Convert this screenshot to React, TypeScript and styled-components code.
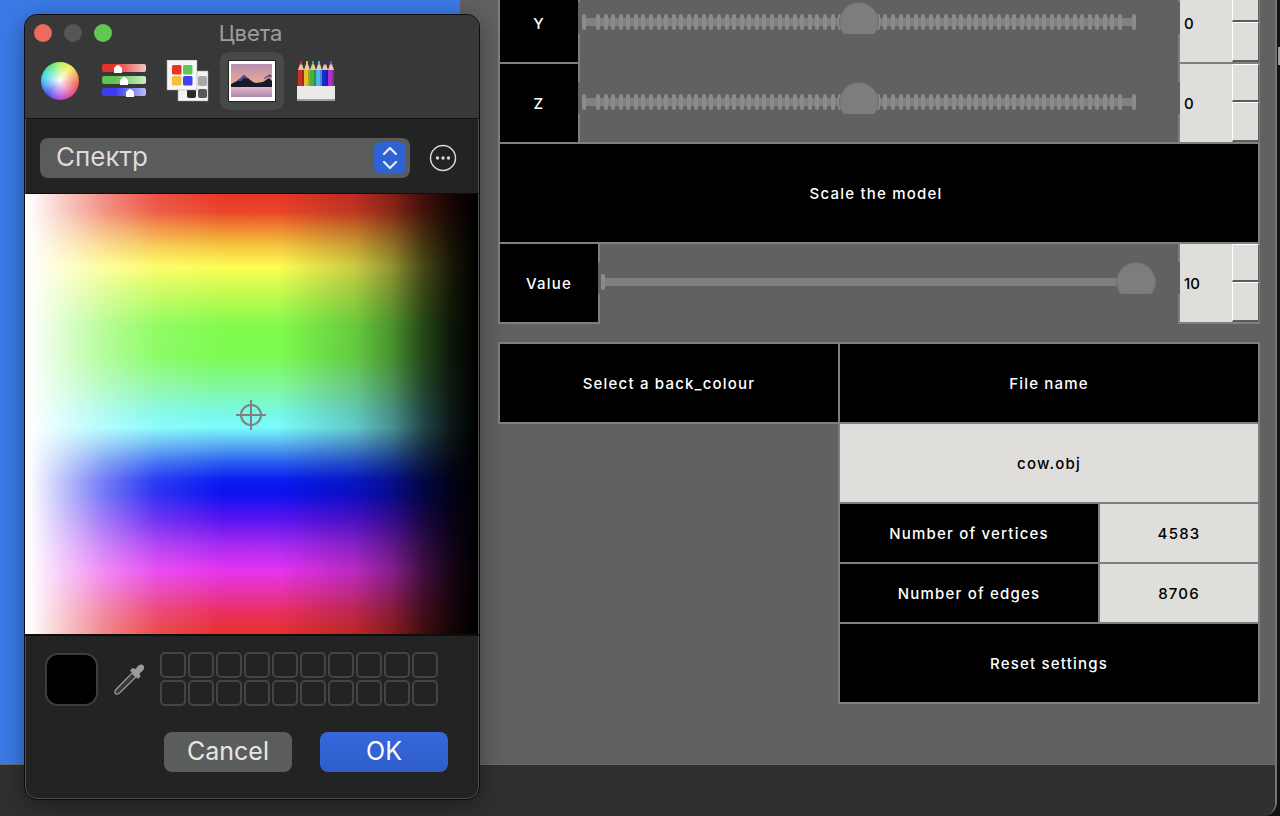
import React from 'react';
import styled, { createGlobalStyle } from 'styled-components';

const GlobalStyle = createGlobalStyle`
    html, body {
        margin: 0;
        padding: 0;
        overflow: hidden;
        background: #121212;
        font-family: "Inter", "Liberation Sans", sans-serif;
    }
`;

const Desktop = styled.div`
    position: relative;
    height: 100vh;
    overflow: hidden;
    background: #121212;
`;

const AppWindow = styled.div`
    display: flex;
    flex-direction: column;
    box-sizing: border-box;
    width: 1277px;
    height: 100%;
    overflow: hidden;
    border-right: 2px solid #747474;
    border-bottom-right-radius: 14px;
`;

const MainArea = styled.div`
    display: flex;
    flex: 1;
    min-height: 0;
`;

const Wallpaper = styled.div`
    width: 460px;
    flex: none;
    background: #3b7be8;
`;

const Panel = styled.div`
    flex: 1;
    overflow: hidden;
    padding-left: 40px;
    background: #616161;
`;

const BottomBar = styled.div`
    height: 51px;
    flex: none;
    background: #303030;
    border-top: 1px solid #6c6c6c;
`;

const EdgeMark = styled.div`
    position: absolute;
    top: 47px;
    right: 0;
    width: 2px;
    height: 18px;
    background: #a0a0a0;
`;

/* qt form */

const Form = styled.div`
    display: flex;
    flex-direction: column;
    gap: 2px;
    width: 758px;
    margin-top: -16px;
`;

const Row = styled.div<{ $h: number }>`
    display: flex;
    gap: 2px;
    height: ${p => p.$h}px;
    flex: none;
`;

const Cell = styled.div<{ $w?: number; $light?: boolean; $nudge?: number }>`
    display: flex;
    align-items: center;
    justify-content: center;
    box-sizing: border-box;
    flex: ${p => (p.$w ? `0 0 ${p.$w}px` : '1')};
    padding-right: ${p => p.$nudge || 0}px;
    box-shadow: 0 0 0 2px #7f7f7f;
    background: ${p => (p.$light ? '#dfdeda' : '#000')};
    color: ${p => (p.$light ? '#000' : '#fff')};
    font-size: 15px;
    font-weight: 500;
    letter-spacing: 1.2px;
`;

const SliderCell = styled.div`
    flex: 1;
    padding-top: 18px;
    margin: 0 -2px;
    min-width: 0;
`;

const SliderBox = styled.div<{ $pad: number }>`
    position: relative;
    height: 32px;
    overflow: hidden;
    padding-left: ${p => p.$pad}px;
    background: #616161;
`;

const Rail = styled.div<{ $w: number }>`
    position: relative;
    display: flex;
    align-items: center;
    width: ${p => p.$w}px;
    height: 40px;
    background: linear-gradient(#808080, #808080) center / 100% 8px no-repeat;
`;

const Tick = styled.span<{ $gap: number; $end?: boolean }>`
    flex: none;
    width: 4px;
    height: 16px;
    margin-left: ${p => (p.$end ? 'auto' : `${p.$gap}px`)};
    border-radius: 2px;
    background: #8b8b8b;
`;

const Handle = styled.span<{ $left: number }>`
    position: absolute;
    top: 0;
    left: ${p => p.$left}px;
    box-sizing: border-box;
    width: 40px;
    height: 40px;
    border-radius: 50%;
    border: 1px solid #6c6c6c;
    background: #7d7d7d;
`;

const Spin = styled.div`
    display: flex;
    flex: 0 0 78px;
    box-shadow: 0 0 0 2px #7f7f7f;
    background: #dfdeda;
`;

const SpinValue = styled.div`
    flex: 1;
    display: flex;
    align-items: center;
    padding-left: 4px;
    color: #000;
    font-size: 15px;
    font-weight: 500;
`;

const SpinButtons = styled.div`
    display: flex;
    flex-direction: column;
    flex: 0 0 27px;
    margin-right: -1px;
`;

const SpinButton = styled.div<{ $down?: boolean }>`
    flex: ${p => (p.$down ? '0 0 40px' : '1')};
    box-sizing: border-box;
    background: #dfdeda;
    border-top: 1px solid #fff;
    border-left: 1px solid #fff;
    border-right: 1px solid #5c5c5c;
    border-bottom: 2px solid #5c5c5c;
`;

const FileGrid = styled.div`
    display: grid;
    grid-template-columns: 338px 418px;
    gap: 2px;
    margin-top: 20px;
    align-items: start;
`;

const Stack = styled.div`
    display: flex;
    flex-direction: column;
    gap: 2px;
`;

/* colour dialog */

const Dialog = styled.div`
    position: absolute;
    top: 14px;
    left: 24px;
    box-sizing: border-box;
    display: flex;
    flex-direction: column;
    width: 456px;
    height: 786px;
    overflow: hidden;
    border-radius: 13px;
    border: 1px solid #0c0c0c;
    background: #222323;
    box-shadow: inset 0 0 0 1px #4e4e4e, 0 6px 26px rgba(0, 0, 0, 0.38);
`;

const DialogHead = styled.div`
    flex: none;
    background: #383838;
    border-bottom: 1px solid #111;
    padding-bottom: 8px;
`;

const TitleRow = styled.div`
    position: relative;
    display: flex;
    align-items: center;
    justify-content: center;
    height: 37px;
    padding: 0 3px 2px 0;
    box-sizing: border-box;
    color: #9d9d9d;
    font-size: 22px;
`;

const Lights = styled.div`
    position: absolute;
    left: 9px;
    top: 9px;
    display: flex;
    gap: 12px;
`;

const Light = styled.span<{ $c: string }>`
    width: 18px;
    height: 18px;
    border-radius: 50%;
    background: ${p => p.$c};
`;

const Tabs = styled.div`
    display: flex;
    padding-left: 3px;
`;

const Tab = styled.div<{ $active?: boolean }>`
    display: flex;
    align-items: center;
    justify-content: center;
    width: 64px;
    height: 58px;
    border-radius: 9px;
    background: ${p => (p.$active ? '#474848' : 'transparent')};
`;

const ColorWheel = styled.div`
    width: 38px;
    height: 38px;
    border-radius: 50%;
    background:
        radial-gradient(circle, rgba(255, 255, 255, 0.95) 0%, rgba(255, 255, 255, 0.45) 40%, rgba(255, 255, 255, 0) 78%),
        conic-gradient(#a8ef50, #f8ee3e 35deg, #ee4a3a 100deg, #d8309a 150deg, #a030e0 185deg, #2a40e8 225deg, #28c8ee 280deg, #40e080 325deg, #a8ef50);
`;

const ControlRow = styled.div`
    display: flex;
    align-items: center;
    flex: none;
    box-sizing: border-box;
    height: 75px;
    padding: 3px 0 0 15px;
    border-bottom: 1px solid #0e0e0e;
`;

const Popup = styled.div`
    display: flex;
    align-items: center;
    justify-content: space-between;
    box-sizing: border-box;
    width: 370px;
    height: 40px;
    padding: 0 4px 0 16px;
    border-radius: 8px;
    background: #5a5b5b;
    color: #dcdcdc;
    font-size: 26px;
`;

const PopupLabel = styled.span`
    margin-top: -2px;
`;

const PopupArrows = styled.span`
    display: flex;
    align-items: center;
    justify-content: center;
    width: 32px;
    height: 32px;
    border-radius: 7px;
    background: #2f62d2;
`;

const MoreButton = styled.span`
    display: flex;
    margin-left: 19px;
`;

const Spectrum = styled.div`
    position: relative;
    flex: none;
    width: 454px;
    height: 440px;
    margin-left: -1px;
    background:
        linear-gradient(90deg, #fff 0%, #fff 1%, rgba(255, 255, 255, 0.72) 9%, rgba(255, 255, 255, 0.42) 18%, rgba(255, 255, 255, 0.14) 29%, rgba(255, 255, 255, 0) 44%),
        linear-gradient(90deg, rgba(0, 0, 0, 0) 56%, rgba(0, 0, 0, 0.2) 73%, rgba(0, 0, 0, 0.42) 81%, rgba(0, 0, 0, 0.72) 88%, rgba(0, 0, 0, 0.9) 94%, #000 99.500%),
        linear-gradient(180deg, #e8352a 0%, #ea4528 4%, #f08a32 8%, #f6c840 12%, #fdfd54 16.5%, #c8fb50 22%, #82fb4c 30%, #7bfb52 37%, #80f8a0 44%, #78f8e8 50%, #7afcfb 53%, #58aef2 57%, #2a5ef0 61%, #0a1cf0 65%, #0a12f0 68%, #5a14f0 74%, #a82af0 80%, #e633f0 85.5%, #e832b0 90%, #e83060 95%, #e8302a 100%);
`;

const Crosshair = styled.svg`
    position: absolute;
    left: 211px;
    top: 205px;
`;

const Bottom = styled.div`
    flex: 1;
    border-top: 2px solid #0e0e0e;
    padding: 16px 31px 0 20px;
`;

const WellRow = styled.div`
    display: flex;
    align-items: center;
    height: 54px;
`;

const CurrentWell = styled.div`
    box-sizing: border-box;
    width: 53px;
    height: 53px;
    border-radius: 13px;
    border: 2px solid #3e3e3e;
    background: #000;
`;

const Dropper = styled.svg`
    flex: none;
    margin: 0 14px 0 15px;
`;

const Saved = styled.div`
    display: grid;
    grid-template-columns: repeat(10, 26px);
    grid-auto-rows: 26px;
    gap: 2px;
    margin-left: 1px;
`;

const SavedCell = styled.div`
    box-sizing: border-box;
    border: 2px solid #454545;
    border-radius: 5px;
`;

const Buttons = styled.div`
    display: flex;
    justify-content: flex-end;
    gap: 28px;
    margin-top: 26px;
`;

const DialogButton = styled.div<{ $primary?: boolean }>`
    display: flex;
    align-items: center;
    justify-content: center;
    box-sizing: border-box;
    width: 128px;
    height: 40px;
    padding-bottom: 2px;
    border-radius: 8px;
    background: ${p => (p.$primary ? 'linear-gradient(#3668dc, #2f5ecb)' : '#5b5c5c')};
    color: ${p => (p.$primary ? '#fff' : '#e6e6e6')};
    font-size: 25px;
`;

const tickGaps = Array.from({ length: 70 }, (_, i) =>
    i === 0 ? 10 : Math.round(i * 7.565) - Math.round((i - 1) * 7.565) - 4
);

const SpinBox = ({ value }: { value: string }) => (
    <Spin>
        <SpinValue>{value}</SpinValue>
        <SpinButtons>
            <SpinButton />
            <SpinButton $down />
        </SpinButtons>
    </Spin>
);

const AxisRow = ({ name, value }: { name: string; value: string }) => (
    <Row $h={78}>
        <Cell $w={78}>{name}</Cell>
        <SliderCell>
            <SliderBox $pad={4}>
                <Rail $w={554}>
                    <Tick $gap={0} />
                    {tickGaps.map((g, i) => <Tick key={i} $gap={g} />)}
                    <Tick $gap={0} $end />
                    <Handle $left={257} />
                </Rail>
            </SliderBox>
        </SliderCell>
        <SpinBox value={value} />
    </Row>
);

const SlidersIcon = () => (
    <svg width="46" height="36" viewBox="0 0 46 36">
        <defs>
            <linearGradient id="sr"><stop offset="0.25" stopColor="#e4332b" /><stop offset="1" stopColor="#f2c8c4" /></linearGradient>
            <linearGradient id="sg"><stop offset="0.3" stopColor="#62c256" /><stop offset="1" stopColor="#cceec4" /></linearGradient>
            <linearGradient id="sb"><stop offset="0.3" stopColor="#3c3cf0" /><stop offset="1" stopColor="#bcbcf4" /></linearGradient>
        </defs>
        <rect x="1" y="1" width="44" height="8" rx="2" fill="url(#sr)" />
        <rect x="1" y="13" width="44" height="8" rx="2" fill="url(#sg)" />
        <rect x="1" y="25" width="44" height="8" rx="2" fill="url(#sb)" />
        <path d="M13 10V5.500c0-1 3-3.500 4-3.500s4 2.500 4 3.500V10z" fill="#fff" />
        <path d="M19 22v-4.500c0-1 3-3.500 4-3.500s4 2.500 4 3.500V22z" fill="#fff" />
        <path d="M25 34v-4.500c0-1 3-3.500 4-3.500s4 2.500 4 3.500V34z" fill="#fff" />
    </svg>
);

const PaletteIcon = () => (
    <svg width="44" height="42" viewBox="0 0 44 42">
        <rect x="12" y="11" width="30" height="30" fill="#f4f4f4" stroke="#9a9a9a" strokeWidth="0.5" />
        <rect x="32" y="16" width="9" height="10" rx="2" fill="#a8a8a8" />
        <rect x="21" y="29" width="9" height="9" rx="2" fill="#2a2a2a" />
        <rect x="32" y="29" width="9" height="9" rx="2" fill="#585858" />
        <rect x="1" y="0" width="30" height="30" fill="#f6f6f6" stroke="#9a9a9a" strokeWidth="0.5" />
        <rect x="6" y="5" width="9.500" height="9.500" rx="1.500" fill="#e63327" />
        <rect x="17" y="5" width="9.500" height="9.500" rx="1.500" fill="#62c654" />
        <rect x="6" y="16" width="9.500" height="9.500" rx="1.500" fill="#f4bf3c" />
        <rect x="17" y="16" width="9.500" height="9.500" rx="1.500" fill="#4242ec" />
    </svg>
);

const ImageIcon = () => (
    <svg width="48" height="42" viewBox="0 0 48 42">
        <defs>
            <linearGradient id="sky" x2="0" y2="1">
                <stop offset="0" stopColor="#b690b4" />
                <stop offset="0.55" stopColor="#e8a890" />
                <stop offset="1" stopColor="#fae496" />
            </linearGradient>
            <linearGradient id="lake" x2="0" y2="1">
                <stop offset="0" stopColor="#e0b8c8" />
                <stop offset="1" stopColor="#ae86ac" />
            </linearGradient>
        </defs>
        <rect x="0.5" y="0.5" width="47" height="41" fill="#fff" stroke="#222" />
        <rect x="3" y="4" width="41" height="33" fill="url(#sky)" />
        <rect x="3" y="27" width="41" height="10" fill="url(#lake)" />
        <path d="M3 24l6-3 7-6 5 4 4 3 3 1 7-1 6-4 3 3v6H3z" fill="#181826" />
        <path d="M9 21l7-6 5 4-5-1-3 3zM36 18l6-4 2 3-4 0-3 2z" fill="#5a4c90" />
    </svg>
);

const pencilColors = ['#c8302c', '#e0c030', '#46b040', '#4cb8f0', '#1828d8', '#b030d0'];

const PencilsIcon = () => (
    <svg width="40" height="42" viewBox="0 0 40 42">
        {pencilColors.map((c, i) => (
            <g key={c} transform={`translate(${2 + i * 6},0)`}>
                <path d="M0 10l2-6h2l2 6z" fill="#eac9a0" />
                <path d="M2 4.500V1.500c0-.6 2-.6 2 0v3z" fill={c} />
                <rect x="0" y="10" width="6" height="17" fill={c} />
                <rect x="4" y="10" width="2" height="17" fill="#000" opacity="0.2" />
            </g>
        ))}
        <rect x="1" y="26" width="38" height="14" fill="#eaeaea" />
        <rect x="1" y="39" width="38" height="2" fill="#a0a0a0" />
    </svg>
);

export default function App() {
    return (
        <>
            <GlobalStyle />
            <Desktop>
                <AppWindow>
                    <MainArea>
                        <Wallpaper />
                        <Panel>
                            <Form>
                                <AxisRow name="Y" value="0" />
                                <AxisRow name="Z" value="0" />
                                <Row $h={98}><Cell $nudge={6}>Scale the model</Cell></Row>
                                <Row $h={78}>
                                    <Cell $w={98}>Value</Cell>
                                    <SliderCell>
                                        <SliderBox $pad={3}>
                                            <Rail $w={555}>
                                                <Tick $gap={0} />
                                                <Handle $left={515} />
                                            </Rail>
                                        </SliderBox>
                                    </SliderCell>
                                    <SpinBox value="10" />
                                </Row>
                                <FileGrid>
                                    <Row $h={78}><Cell>Select a back_colour</Cell></Row>
                                    <Stack>
                                        <Row $h={78}><Cell>File name</Cell></Row>
                                        <Row $h={78}><Cell $light>cow.obj</Cell></Row>
                                        <Row $h={58}>
                                            <Cell $w={258}>Number of vertices</Cell>
                                            <Cell $light>4583</Cell>
                                        </Row>
                                        <Row $h={58}>
                                            <Cell $w={258}>Number of edges</Cell>
                                            <Cell $light>8706</Cell>
                                        </Row>
                                        <Row $h={78}><Cell>Reset settings</Cell></Row>
                                    </Stack>
                                </FileGrid>
                            </Form>
                        </Panel>
                    </MainArea>
                    <BottomBar />
                </AppWindow>
                <EdgeMark />

                <Dialog>
                    <DialogHead>
                        <TitleRow>
                            <Lights>
                                <Light $c="#ec6a5e" />
                                <Light $c="#555656" />
                                <Light $c="#62c554" />
                            </Lights>
                            Цвета
                        </TitleRow>
                        <Tabs>
                            <Tab><ColorWheel /></Tab>
                            <Tab><SlidersIcon /></Tab>
                            <Tab><PaletteIcon /></Tab>
                            <Tab $active><ImageIcon /></Tab>
                            <Tab><PencilsIcon /></Tab>
                        </Tabs>
                    </DialogHead>
                    <ControlRow>
                        <Popup>
                            <PopupLabel>Спектр</PopupLabel>
                            <PopupArrows>
                                <svg width="18" height="26" viewBox="0 0 18 26" fill="none" stroke="#e8eefc" strokeWidth="2.2" strokeLinecap="round" strokeLinejoin="round">
                                    <path d="M3 9l6-6 6 6" />
                                    <path d="M3 17l6 6 6-6" />
                                </svg>
                            </PopupArrows>
                        </Popup>
                        <MoreButton>
                            <svg width="28" height="28" viewBox="0 0 28 28">
                                <circle cx="14" cy="14" r="12.5" fill="none" stroke="#d8d8d8" strokeWidth="1.5" />
                                <circle cx="8.5" cy="14" r="1.7" fill="#d8d8d8" />
                                <circle cx="14" cy="14" r="1.7" fill="#d8d8d8" />
                                <circle cx="19.5" cy="14" r="1.7" fill="#d8d8d8" />
                            </svg>
                        </MoreButton>
                    </ControlRow>
                    <Spectrum>
                        <Crosshair width="32" height="32" viewBox="0 0 32 32" fill="none" stroke="#808080" strokeWidth="2">
                            <circle cx="16" cy="16" r="10" />
                            <path d="M16 1v30M1 16h30" />
                        </Crosshair>
                    </Spectrum>
                    <Bottom>
                        <WellRow>
                            <CurrentWell />
                            <Dropper width="32" height="32" viewBox="0 0 32 32">
                                <path d="M2.500 30.500c-1-1-1-2 0-3.500L19 10l4 4L6 30.500c-1.300 .8-2.500 1-3.500 0z" fill="#3a3a3a" stroke="#9c9c9c" strokeWidth="1.200" />
                                <path d="M17 7.500l2.500-2.500 3 1 3-3.500c1.500-1.500 4-1.500 5 0s.8 3.500-.5 5l-3.500 3 1 3-2.500 2.500z" fill="#9c9c9c" />
                            </Dropper>
                            <Saved>
                                {Array.from({ length: 20 }, (_, i) => <SavedCell key={i} />)}
                            </Saved>
                        </WellRow>
                        <Buttons>
                            <DialogButton>Cancel</DialogButton>
                            <DialogButton $primary>OK</DialogButton>
                        </Buttons>
                    </Bottom>
                </Dialog>
            </Desktop>
        </>
    );
}
